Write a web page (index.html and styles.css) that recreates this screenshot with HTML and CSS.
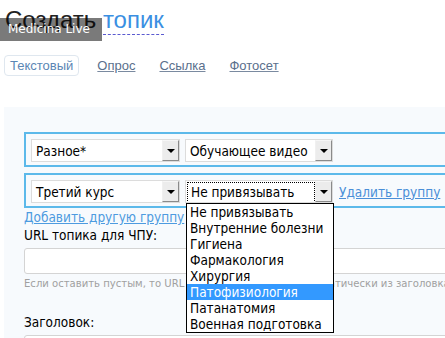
FILE: index.html
```html
<!DOCTYPE html>
<html lang="ru">
<head>
<meta charset="utf-8">
<title>Создать топик</title>
<link rel="stylesheet" href="styles.css">
</head>
<body>
<div class="page">
  <div class="badge">Medicina Live</div>
  <h1 class="title">Создать <span class="title-link">топик</span></h1>
  <nav class="tabs">
    <span class="tab active">Текстовый</span>
    <a class="tab" href="#">Опрос</a>
    <a class="tab" href="#">Ссылка</a>
    <a class="tab" href="#">Фотосет</a>
  </nav>
  <div class="panel">
    <div class="groups">
      <div class="group">
        <div class="select s1"><span class="val">Разное*</span><span class="btn"><span class="tri"></span></span></div>
        <div class="select s2"><span class="val">Обучающее видео</span><span class="btn"><span class="tri"></span></span></div>
      </div>
      <div class="group">
        <div class="select s1"><span class="val">Третий курс</span><span class="btn"><span class="tri"></span></span></div>
        <div class="select s2 focused"><span class="val"><span class="focus">Не привязывать</span></span><span class="btn"><span class="tri"></span></span>
          <ul class="dropdown">
            <li>Не привязывать</li>
            <li>Внутренние болезни</li>
            <li>Гигиена</li>
            <li>Фармакология</li>
            <li>Хирургия</li>
            <li class="hl">Патофизиология</li>
            <li>Патанатомия</li>
            <li>Военная подготовка</li>
          </ul>
        </div>
        <a class="del" href="#">Удалить группу</a>
      </div>
    </div>
    <a class="add" href="#">Добавить другую группу</a>
    <label class="lbl">URL топика для ЧПУ:</label>
    <div class="input"></div>
    <p class="hint">Если оставить пустым, то URL будет сформирован автоматически из заголовка</p>
    <label class="lbl lbl2">Заголовок:</label>
    <div class="input"></div>
  </div>
</div>
</body>
</html>
```
FILE: styles.css
```css
html, body {
  margin: 0;
  padding: 0;
  background: #fff;
}
body {
  width: 445px;
  height: 338px;
  overflow: hidden;
  font-family: "DejaVu Sans Condensed", "DejaVu Sans", Verdana, sans-serif;
  font-stretch: condensed;
}
.page {
  position: relative;
  padding-left: 4px;
}
.badge {
  position: absolute;
  left: 0;
  top: 14px;
  width: 102px;
  height: 23px;
  background: rgba(0, 0, 0, 0.52);
  color: #fff;
  font: 12px/23px "DejaVu Sans", sans-serif;
  font-stretch: normal;
  padding-left: 8px;
  box-sizing: border-box;
  z-index: 5;
}
.title {
  margin: 4px 0 0 1px;
  font: normal 24px/31px "Liberation Sans", Arial, sans-serif;
  font-stretch: normal;
  color: #222;
  white-space: nowrap;
}
.title-link {
  color: #3b8fe2;
  border-bottom: 1px dashed #5a5ad0;
  padding-bottom: 1px;
}
.tabs {
  display: flex;
  gap: 12px;
  margin-top: 20px;
  font: 13px/19px "Liberation Sans", Arial, sans-serif;
  font-stretch: normal;
}
.tab {
  border: 1px solid transparent;
  border-radius: 4px;
  padding: 0 5px;
  color: #5a6f8c;
  text-decoration: underline;
  text-decoration-color: #7a8aa0;
}
.tab.active {
  border-color: #dfe7ef;
  color: #5b86b4;
  text-decoration: none;
}
.panel {
  margin-top: 31px;
  width: 700px;
  background: #f7fafd;
  padding: 25px 0 40px 20px;
  box-sizing: border-box;
}
.groups {
  display: flex;
  flex-direction: column;
  gap: 6px;
}
.group {
  display: flex;
  align-items: center;
  gap: 5px;
  border: 2px solid #5cb9ea;
  padding: 5px 5px 3px;
  width: 600px;
}
.select {
  position: relative;
  display: flex;
  height: 23px;
  box-sizing: border-box;
  border: 1px solid #dcdcdc;
  background: #fff;
  font-size: 13.5px;
  color: #000;
}
.s1 { width: 149px; }
.s2 { width: 148px; }
.val {
  flex: 1;
  padding: 1px 0 0 4px;
  line-height: 20px;
  white-space: nowrap;
  overflow: hidden;
}
.focused .val {
  padding: 1px 0 0 1px;
}
.focus {
  display: block;
  border: 1px dotted #000;
  height: 19px;
  line-height: 19px;
  padding-left: 3px;
}
.btn {
  width: 17px;
  flex: none;
  box-sizing: border-box;
  background: #ececec;
  border: 1px solid;
  border-color: #f6f6f6 #8a8a8a #8a8a8a #f0f0f0;
  display: flex;
  align-items: center;
  justify-content: center;
}
.tri {
  width: 0;
  height: 0;
  border-left: 4px solid transparent;
  border-right: 4px solid transparent;
  border-top: 4px solid #000;
  margin-top: 1px;
}
.dropdown {
  position: absolute;
  left: 0;
  top: 22px;
  width: 148px;
  box-sizing: border-box;
  margin: 0;
  padding: 0;
  list-style: none;
  background: #fff;
  border: 1px solid #000;
  z-index: 4;
}
.dropdown li {
  height: 16px;
  line-height: 16px;
  padding-left: 3px;
  white-space: nowrap;
}
.dropdown li.hl {
  background: #3399ff;
  color: #fff;
}
.del {
  margin-left: 1px;
  color: #4a8fd8;
  font-size: 13.5px;
  white-space: nowrap;
}
.add {
  display: block;
  margin-top: 1px;
  color: #4d9be0;
  font-size: 13.5px;
  line-height: 16px;
}
.lbl {
  display: block;
  margin-top: 2px;
  font-size: 13.5px;
  line-height: 16px;
  color: #000;
}
.lbl2 {
  margin-top: 23px;
}
.input {
  margin-top: 5px;
  width: 620px;
  height: 26px;
  box-sizing: border-box;
  border: 1px solid #d4d4d4;
  border-radius: 3px;
  background: #fff;
}
.hint {
  margin: 3px 0 0;
  font-size: 11.2px;
  line-height: 14px;
  color: #a0a0a0;
  white-space: nowrap;
}
```
